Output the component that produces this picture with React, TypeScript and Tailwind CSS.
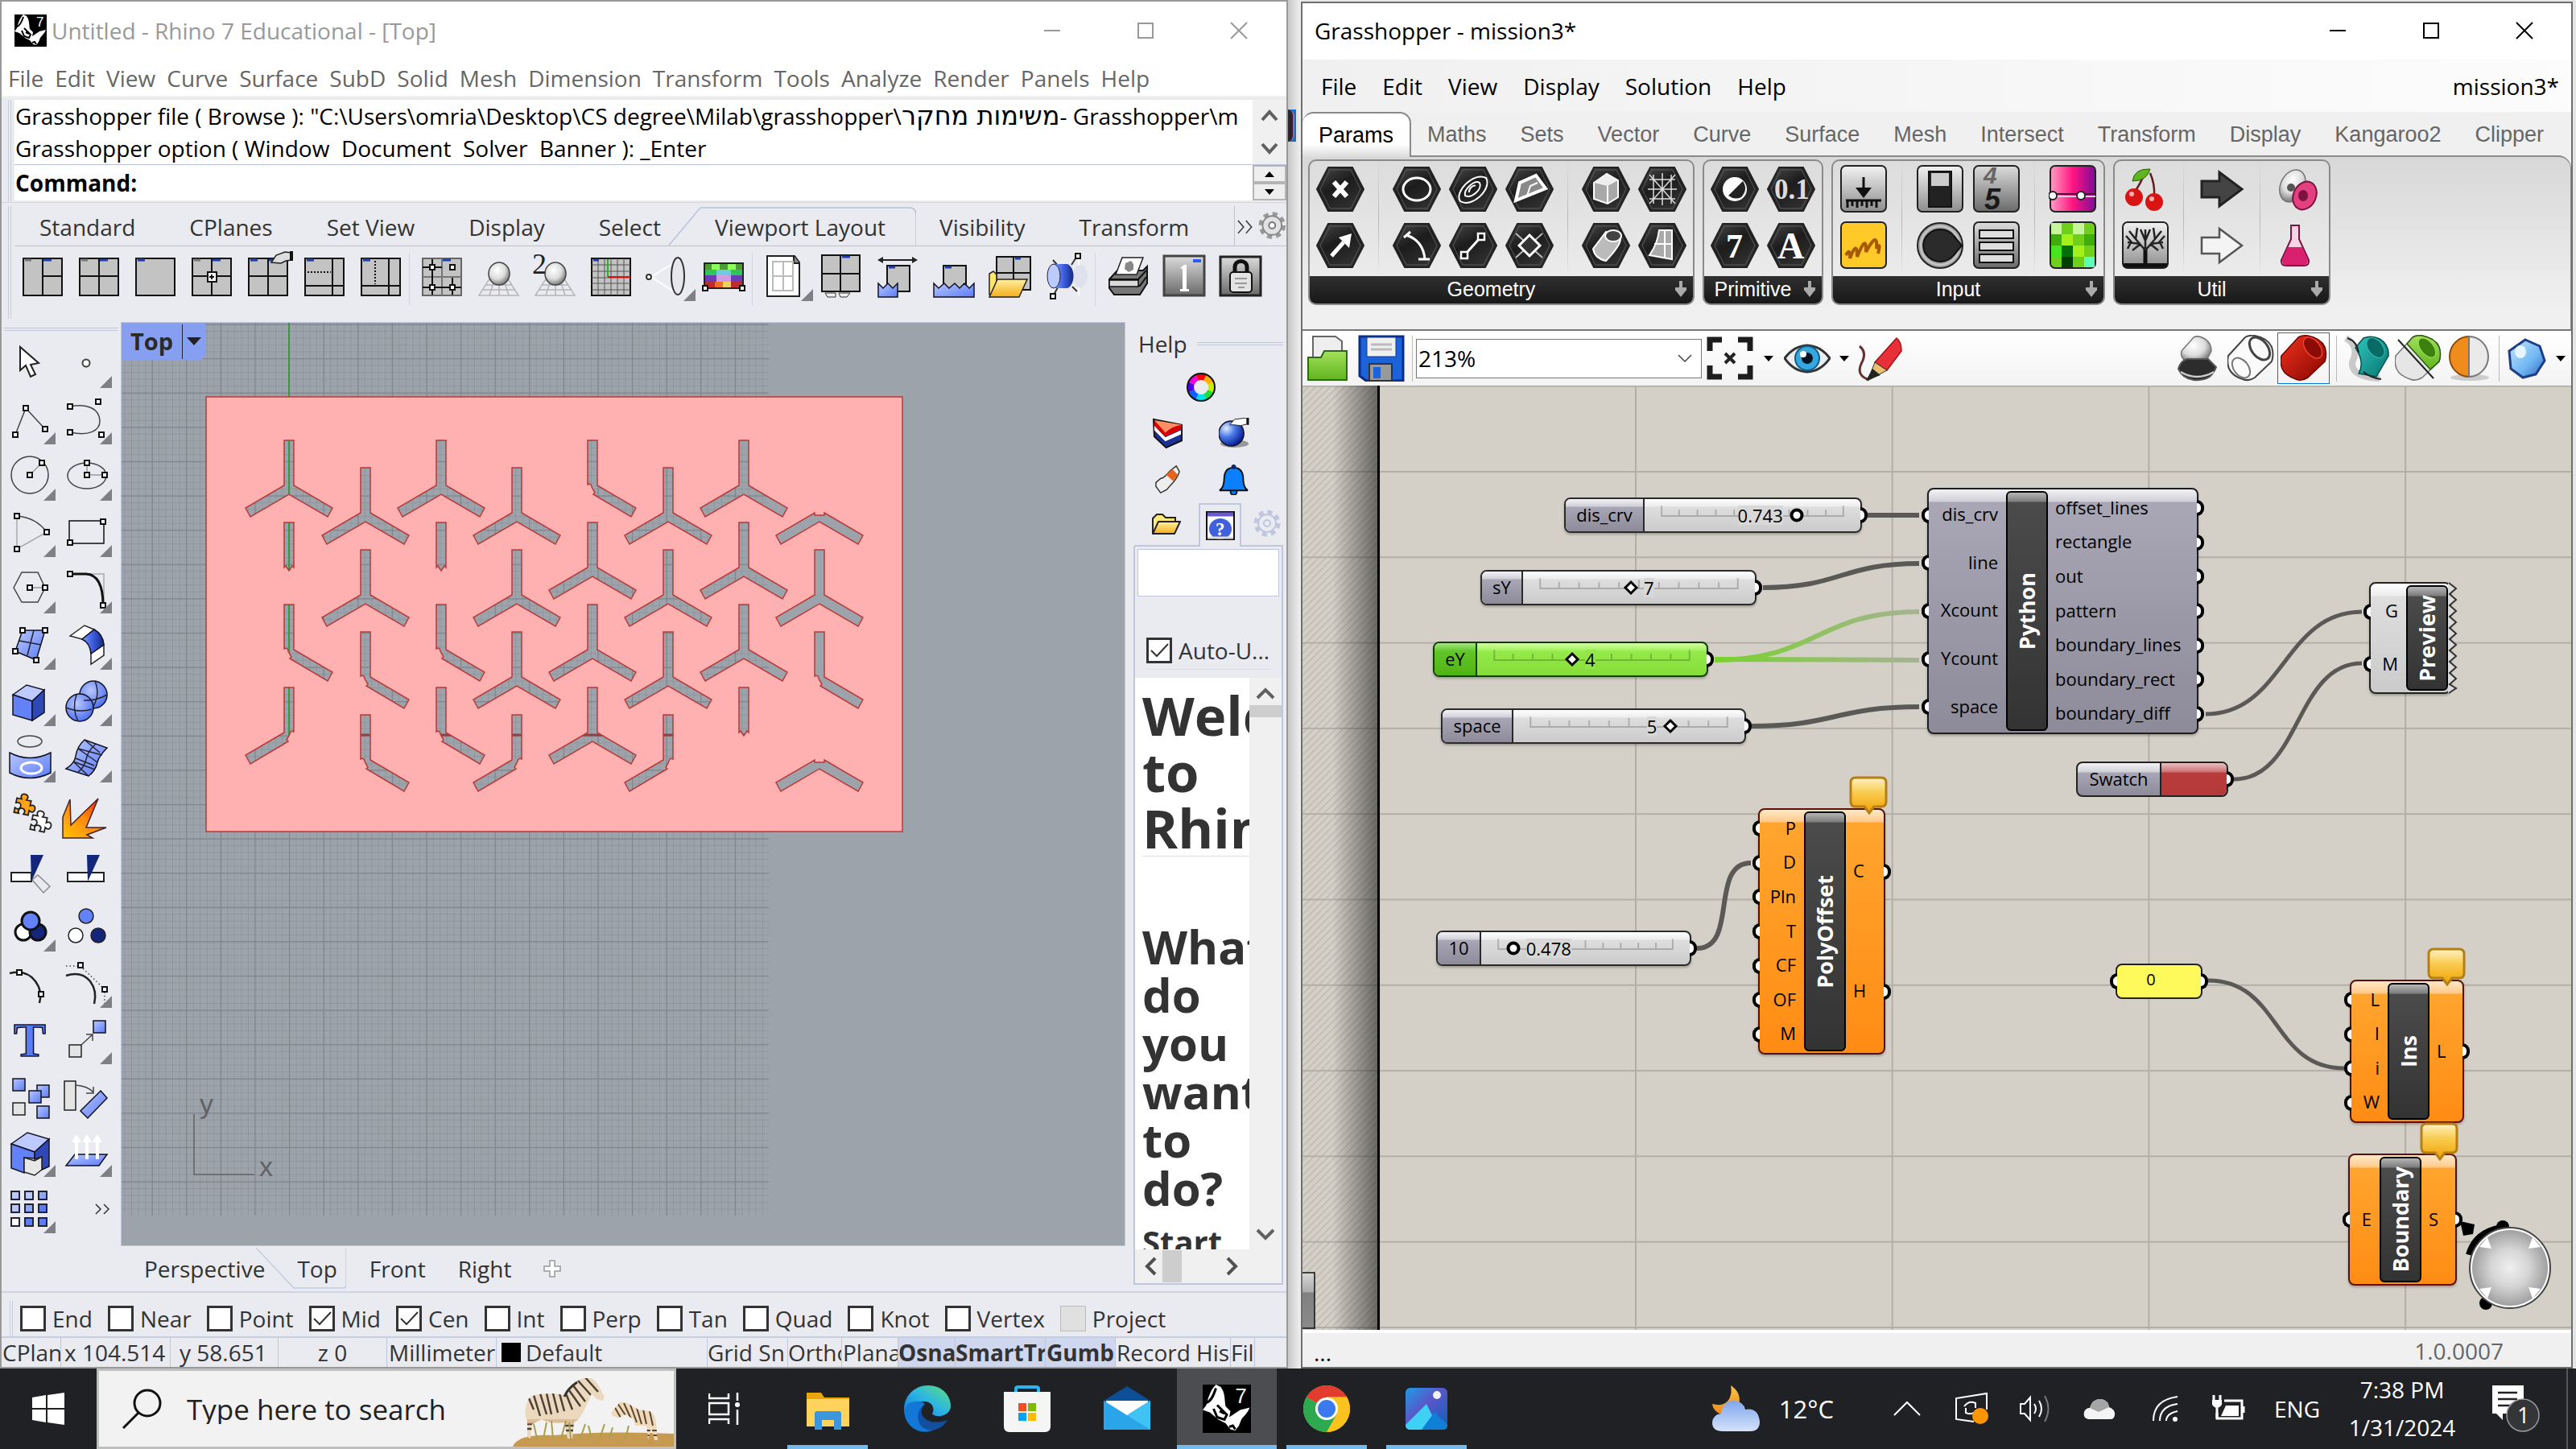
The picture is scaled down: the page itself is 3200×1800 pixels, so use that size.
import type { ReactNode } from "react";

/* ---------- shared paint ---------- */

function Paints() {
  return (
    <svg className="absolute h-0 w-0" aria-hidden="true">
      <defs>
        <linearGradient id="blue" x1="0" y1="0" x2="1" y2="1">
          <stop offset="0" stopColor="#b9c8ff" />
          <stop offset="1" stopColor="#5b7cf7" />
        </linearGradient>
        <linearGradient id="deep" x1="0" y1="0" x2="1" y2="0">
          <stop offset="0" stopColor="#7d9bff" />
          <stop offset="0.5" stopColor="#3c5ce0" />
          <stop offset="1" stopColor="#14297e" />
        </linearGradient>
        <linearGradient id="gray" x1="0" y1="0" x2="0" y2="1">
          <stop offset="0" stopColor="#f2f2f2" />
          <stop offset="1" stopColor="#8d8d8d" />
        </linearGradient>
        <linearGradient id="dark" x1="0" y1="0" x2="0" y2="1">
          <stop offset="0" stopColor="#dcdcdc" />
          <stop offset="1" stopColor="#6a6a6a" />
        </linearGradient>
        <radialGradient id="ball" cx="0.4" cy="0.35" r="0.65">
          <stop offset="0" stopColor="#ffffff" />
          <stop offset="0.6" stopColor="#dcdcdc" />
          <stop offset="1" stopColor="#7c7c7c" />
        </radialGradient>
        <radialGradient id="blueball" cx="0.4" cy="0.35" r="0.65">
          <stop offset="0" stopColor="#b8c9ff" />
          <stop offset="1" stopColor="#5272f0" />
        </radialGradient>
        <radialGradient id="navyball" cx="0.3" cy="0.3" r="0.75">
          <stop offset="0" stopColor="#e4efff" />
          <stop offset="0.45" stopColor="#4a7be8" />
          <stop offset="1" stopColor="#061d94" />
        </radialGradient>
        <linearGradient id="fire" x1="0" y1="1" x2="1" y2="0">
          <stop offset="0" stopColor="#ffc400" />
          <stop offset="0.5" stopColor="#ff8a14" />
          <stop offset="1" stopColor="#e51b00" />
        </linearGradient>
        <linearGradient id="folder" x1="0" y1="0" x2="0" y2="1">
          <stop offset="0" stopColor="#fff0a0" />
          <stop offset="1" stopColor="#f5ae19" />
        </linearGradient>
        <linearGradient id="hex" x1="0" y1="0" x2="0.6" y2="1">
          <stop offset="0" stopColor="#4a4a4a" />
          <stop offset="0.5" stopColor="#1c1c1c" />
          <stop offset="1" stopColor="#303030" />
        </linearGradient>
        <linearGradient id="green" x1="0" y1="0" x2="0" y2="1">
          <stop offset="0" stopColor="#a4e05c" />
          <stop offset="1" stopColor="#5fb51e" />
        </linearGradient>
        <linearGradient id="red" x1="0" y1="0" x2="1" y2="1">
          <stop offset="0" stopColor="#f0321e" />
          <stop offset="1" stopColor="#860500" />
        </linearGradient>
        <linearGradient id="teal" x1="0" y1="0" x2="1" y2="1">
          <stop offset="0" stopColor="#2fc4bd" />
          <stop offset="1" stopColor="#077670" />
        </linearGradient>
        <linearGradient id="pink" x1="0" y1="0" x2="1" y2="0">
          <stop offset="0" stopColor="#ff9fc4" />
          <stop offset="0.5" stopColor="#ff1480" />
          <stop offset="1" stopColor="#7e0a9a" />
        </linearGradient>
        <linearGradient id="sky" x1="0" y1="0" x2="1" y2="1">
          <stop offset="0" stopColor="#c5e8ff" />
          <stop offset="0.6" stopColor="#6fb6f2" />
          <stop offset="1" stopColor="#2c62ba" />
        </linearGradient>
        <linearGradient id="cloud" x1="0" y1="0" x2="0" y2="1">
          <stop offset="0" stopColor="#7fa6ee" />
          <stop offset="1" stopColor="#d5e2fa" />
        </linearGradient>
        <linearGradient id="moon" x1="0" y1="0" x2="0" y2="1">
          <stop offset="0" stopColor="#f6c544" />
          <stop offset="1" stopColor="#ef8b1a" />
        </linearGradient>
        <linearGradient id="edge" x1="0" y1="1" x2="1" y2="0">
          <stop offset="0" stopColor="#1277d6" />
          <stop offset="0.5" stopColor="#2bb5e4" />
          <stop offset="1" stopColor="#5fe07a" />
        </linearGradient>
        <linearGradient id="photo" x1="0" y1="0" x2="1" y2="1">
          <stop offset="0" stopColor="#1e9be6" />
          <stop offset="0.45" stopColor="#5a56c8" />
          <stop offset="1" stopColor="#0a62b8" />
        </linearGradient>
        <radialGradient id="knob">
          <stop offset="0" stopColor="#f0f0f0" />
          <stop offset="0.5" stopColor="#d5d5d5" />
          <stop offset="1" stopColor="#a0a0a0" />
        </radialGradient>
      </defs>
    </svg>
  );
}

type Kids = { children?: ReactNode };

function Dot({ x, y }: { x: number; y: number }) {
  return <rect x={x - 3} y={y - 3} width="6" height="6" fill="#fff" stroke="#111" strokeWidth="2" />;
}

function RhinoLogo({ className }: { className: string }) {
  return (
    <svg viewBox="0 0 40 40" className={className} aria-label="Rhino">
      <rect width="40" height="40" fill="#000" />
      <path d="M3 17C5 9 7 4 11 0L15 2C19 7 18 14 19 18L23 22L22 27L31 21L39 19C37 24 34 26 32 29L30 34L27 38L23 37L19 32L13 29L6 23L0 21Z" fill="#fff" />
      <path d="M3 15C7 14 9 9 11 3M9 20L12 27L18 29L20 25L15 20L12 17M14 22L18 24M22 35L25 34L27 37" fill="none" stroke="#000" strokeWidth="2" />
      <text x="27" y="15" fontSize="17" fill="#fff" fontFamily="Liberation Sans, sans-serif">7</text>
    </svg>
  );
}

/* ---------- Rhino viewport-layout toolbar icons (50 x 48) ---------- */

function Pane({ d, dots, children }: Kids & { d: string; dots?: string }) {
  return (
    <>
      <rect x="1" y="1" width="48" height="46" fill="#c3c3c3" stroke="#111" strokeWidth="2" />
      <path d={d} stroke="#111" strokeWidth="2" fill="none" />
      {dots && <path d={dots} stroke="#111" strokeWidth="2" strokeDasharray="2 2" />}
      <path d="M3 3h8" stroke="#777" strokeWidth="3" />
      {children}
    </>
  );
}

const Blue = ({ d }: { d: string }) => <path d={d} stroke="#1c3fb4" strokeWidth="3" />;

const GroundBall = () => (
  <>
    <path d="M13 28H38L50 47H1ZM9 34H41M5 40H45M20 28L14 47M26 28V47M32 28L38 47" fill="none" stroke="#b5b5b5" strokeWidth="1.5" />
    <ellipse cx="26" cy="20" rx="13" ry="14" fill="url(#ball)" stroke="#444" strokeWidth="1.5" />
  </>
);

const toolbar: { name: string; icon?: ReactNode; tri?: boolean }[] = [
  { name: "Three views", icon: <Pane d="M25 1V47M25 23H49"><Blue d="M26 3H36" /></Pane> },
  { name: "Four views", icon: <Pane d="M25 1V47M1 23H49"><Blue d="M26 3H36" /></Pane> },
  { name: "Maximize", icon: <Pane d=""><Blue d="M3 3H12" /></Pane> },
  { name: "Split center", icon: <Pane d="M25 1V47M1 23H49"><Blue d="M26 3H36" /><rect x="20" y="18" width="11" height="12" fill="#fff" stroke="#111" strokeWidth="2" /><path d="M25 21V27M22 24H28" stroke="#111" strokeWidth="2" /></Pane> },
  { name: "New view", icon: <Pane d="M25 1V47M1 23H49"><Blue d="M3 3H12M26 3H36" /><path d="M29 6L35-3L46-7L54-6V3L47 4L41 7Z" fill="#ddd" stroke="#222" strokeWidth="1.5" /><path d="M54-8V4" stroke="#111" strokeWidth="4" /></Pane> },
  { name: "Split horizontal", icon: <Pane d="M35 1V47M1 35H49" dots="M4 18H33"><Blue d="M3 3H12" /></Pane> },
  { name: "Split vertical", icon: <Pane d="M35 1V47M1 35H49" dots="M18 4V33"><Blue d="M3 3H12" /></Pane> },
  { name: "" },
  { name: "Link views", icon: <><rect x="1" y="1" width="48" height="46" fill="#c3c3c3" stroke="#666" strokeWidth="2" /><path d="M25 1V47M1 24H49" stroke="#777" strokeWidth="2" /><path d="M13 2V46M1 12H25M1 37H49M38 25V46" stroke="#111" strokeWidth="2" /><Blue d="M26 3H36" /><Dot x={13} y={12} /><Dot x={38} y={12} /><Dot x={13} y={37} /><Dot x={38} y={37} /></> },
  { name: "Named view", icon: <GroundBall /> },
  { name: "Two named views", icon: <><GroundBall /><text x="-3" y="20" fontSize="36" fontFamily="Liberation Serif, serif" fill="#222">2</text></> },
  { name: "Grid", icon: <><rect x="1" y="1" width="48" height="46" fill="#c3c3c3" stroke="#111" strokeWidth="2" /><path d="M9 1V47M17 1V47M25 1V47M33 1V47M41 1V47M1 9H49M1 17H49M1 25H49M1 32H49M1 40H49" stroke="#555" /><path d="M21 2V24" stroke="#1cb81c" strokeWidth="2" /><path d="M21 24H49" stroke="#e01010" strokeWidth="2" /><Blue d="M3 3H10" /></> },
  { name: "Lens", tri: true, icon: <><path d="M5 24L37 4M5 24L37 45" stroke="#fff" strokeWidth="2" /><circle cx="2" cy="24" r="3" fill="#fff" stroke="#333" strokeWidth="2" /><ellipse cx="38" cy="23" rx="8" ry="23" fill="#e6e6ec" stroke="#333" strokeWidth="2" /></> },
  { name: "Background bitmap", icon: <><path d="M1 7H49V15H1Z" fill="#4c9a38" /><path d="M10 7H20V15H10ZM30 7H40V15H30Z" fill="#8bff5a" /><path d="M1 15H49V22H1Z" fill="#2fc45b" /><path d="M16 15H34V22H16Z" fill="#6fc9df" /><path d="M1 22H49V30H1Z" fill="#6a3cb8" /><path d="M16 22H34V30H16Z" fill="#d09be3" /><path d="M1 30H49V37H1Z" fill="#bf2a2c" /><path d="M14 30H24V37H14Z" fill="#e8702a" /><path d="M24 30H34V37H24Z" fill="#f0d060" /><rect x="1" y="7" width="48" height="31" fill="none" stroke="#222" strokeWidth="2" /><Dot x={2} y={38} /><Dot x={48} y={38} /></> },
  { name: "" },
  { name: "New layout", tri: true, icon: <><path d="M3-2H37L43 6V48H3Z" fill="#fff" stroke="#222" strokeWidth="2" /><path d="M36-2V7H43" fill="#888" stroke="#222" strokeWidth="2" /><path d="M10 5H35V41H10ZM23 5V41M10 23H35" fill="none" stroke="#bbb" strokeWidth="2" /></> },
  { name: "Viewport properties", icon: <><path d="M5 44H18V49H8ZM22 44H36L32 49H24Z" fill="#eee" stroke="#333" /><path d="M1-3H48V42H1ZM24-3V42M1 20H48" fill="#c3c3c3" stroke="#111" strokeWidth="2" /><Blue d="M26-1H36" /></> },
  { name: "Sync width", icon: <><path d="M12 10H40V42H12Z" fill="#c3c3c3" stroke="#111" strokeWidth="2" /><Blue d="M14 12H22" /><path d="M1 32L7 38L13 32L19 38L25 32V49H1Z" fill="url(#blue)" stroke="#112" strokeWidth="1.5" /><path d="M2 3H48" stroke="#222" strokeWidth="2" /><path d="M0 3L7-1V7ZM50 3L43-1V7Z" fill="#222" /></> },
  { name: "Float viewport", icon: <><path d="M12 10H40V38H12Z" fill="#c3c3c3" stroke="#111" strokeWidth="2" /><Blue d="M14 12H22" /><path d="M0 32L6 38L13 32L19 38L26 32L32 38L38 32L44 38L50 32V49H0Z" fill="url(#blue)" stroke="#112" strokeWidth="1.5" /></> },
  { name: "Open layout", icon: <><path d="M8-1H50V40H8ZM29-1V40M8 19H50" fill="#c3c3c3" stroke="#111" strokeWidth="2" /><Blue d="M31 1H38" /><path d="M-1 46V20L4 17L8 21V46Z" fill="#ffe569" stroke="#222" strokeWidth="1.5" /><path d="M9 27H46L36 49H-1Z" fill="url(#folder)" stroke="#222" strokeWidth="1.5" /></> },
  { name: "Camera", icon: <><path d="M8 3L40 44M8 42L38-2M40 0V47" stroke="#fff" strokeWidth="2" /><path d="M8 3L15 11M38 42L32 36M8 48L14 37M38-2L31 9" stroke="#333" strokeWidth="2" /><ellipse cx="42" cy="23" rx="9" ry="14" fill="#dfe1ef" /><path d="M10 8H26C36 12 36 34 26 38H10Z" fill="url(#deep)" /><ellipse cx="9" cy="23" rx="8" ry="15" fill="#bccbff" stroke="#223" /><Dot x={39} y={-2} /><Dot x={8} y={48} /></> },
  { name: "" },
  { name: "Print", icon: <><path d="M2 27L12 16H44L49 11V32L40 46H8L2 38Z" fill="#777" stroke="#111" strokeWidth="2" /><path d="M2 27H38L48 16M4 35H40L48 24" fill="none" stroke="#111" strokeWidth="2" /><path d="M2 28H38V36H2Z" fill="#d9d9d9" stroke="#111" strokeWidth="1.5" /><path d="M10 21L18 0H44L36 21Z" fill="#fff" stroke="#222" strokeWidth="1.5" /><path d="M22 7L29 4L32 8V15L26 18L21 14Z" fill="#888" /></> },
  { name: "One to one", icon: <><rect x="0" y="-2" width="50" height="49" fill="url(#dark)" stroke="#444" strokeWidth="3" /><path d="M36 4H46" stroke="#2a5bff" strokeWidth="4" /><path d="M20 13L25 9H28V39H31V42H20V39H23V14Z" fill="#fff" /></> },
  { name: "Lock layout", icon: <><rect x="0" y="-1" width="50" height="48" fill="url(#dark)" stroke="#222" strokeWidth="3" /><path d="M18 20V12C18 2 33 2 33 12V20" fill="none" stroke="#111" strokeWidth="5" /><rect x="12" y="18" width="27" height="25" rx="4" fill="#e3e3e3" stroke="#111" strokeWidth="2" /><path d="M18 26H33M18 32H33M22 37H30" stroke="#999" strokeWidth="2" /></> },
];

/* ---------- Rhino side tool icons (70 x 70) ---------- */

const ln = { fill: "none", stroke: "#444", strokeWidth: 1.5 } as const;
const bl = { fill: "url(#blue)", stroke: "#112", strokeWidth: 1.5 } as const;
const wh = { fill: "#fff", stroke: "#222", strokeWidth: 1.5 } as const;

function Puzzle({ fill, at }: { fill: string; at: string }) {
  const d = "M-9-9H-3C-9-18 9-18 3-9H9V-3C18-9 18 9 9 3V9H3C8 0-8 0-3 9H-9V3C0 8 0-8-9-3Z";
  return <path d={d} transform={at} fill={fill} stroke="#222" strokeWidth="1.8" />;
}

const tools: { name: string; tri: boolean; icon: ReactNode }[] = [
  { name: "Select", tri: false, icon: <path d="M24 16V45L31 39L37 53L43 50L37 38L47 36Z" {...wh} strokeWidth="2" /> },
  { name: "Point", tri: true, icon: <circle cx="36" cy="36" r="4.5" fill="#fff" stroke="#444" strokeWidth="2" /> },
  { name: "Polyline", tri: true, icon: <><path d="M18 55L31 22L55 48" {...ln} /><Dot x={18} y={55} /><Dot x={31} y={22} /><Dot x={55} y={48} /></> },
  { name: "Curve", tri: true, icon: <><path d="M16 20C40 15 53 25 53 38C53 50 40 57 16 52" {...ln} /><Dot x={16} y={20} /><Dot x={51} y={14} /><Dot x={16} y={52} /><Dot x={55} y={55} /></> },
  { name: "Circle", tri: true, icon: <><circle cx="36" cy="35" r="23" {...ln} /><path d="M36 35L51 20" {...ln} stroke="#999" /><Dot x={51} y={20} /><Dot x={36} y={35} /></> },
  { name: "Ellipse", tri: true, icon: <><ellipse cx="37" cy="36" rx="24" ry="16" {...ln} /><path d="M37 20V35H59" {...ln} stroke="#999" /><Dot x={37} y={20} /><Dot x={37} y={35} /><Dot x={59} y={35} /></> },
  { name: "Arc", tri: true, icon: <><path d="M20 16V57L57 36" {...ln} stroke="#aaa" /><path d="M20 16Q44 18 57 36" {...ln} /><Dot x={20} y={16} /><Dot x={57} y={36} /><Dot x={20} y={57} /></> },
  { name: "Rectangle", tri: true, icon: <><rect x="15" y="22" width="43" height="28" {...ln} stroke="#111" /><Dot x={57} y={23} /><Dot x={16} y={49} /></> },
  { name: "Polygon", tri: true, icon: <><path d="M16 35L26 16H46L55 35L46 53H26Z" {...ln} /><path d="M36 35H55" {...ln} stroke="#999" /><Dot x={36} y={35} /><Dot x={55} y={35} /></> },
  { name: "Fillet", tri: true, icon: <><path d="M16 18H58V57" {...ln} stroke="#aaa" /><path d="M16 18H36Q57 19 57 57" {...ln} stroke="#111" strokeWidth="3" /><Dot x={16} y={18} /><Dot x={57} y={57} /></> },
  { name: "Surface", tri: true, icon: <><path d="M27 18H55L44 55L18 44Z" {...bl} /><path d="M41 18L33 49M23 31L50 36" {...ln} stroke="#223" /><Dot x={27} y={18} /><Dot x={55} y={18} /><Dot x={44} y={55} /><Dot x={18} y={44} /></> },
  { name: "Fillet surface", tri: true, icon: <><path d="M16 25L34 12L46 17L31 29Z" {...wh} /><path d="M58 36V49L42 60V47Z" {...wh} /><path d="M46 17Q57 23 58 36L42 47Q41 34 31 29Z" fill="url(#deep)" stroke="#112" strokeWidth="1.5" /></> },
  { name: "Box", tri: true, icon: <><path d="M15 28L32 16L54 22L39 36Z" fill="#bccaff" stroke="#112" strokeWidth="1.5" /><path d="M15 28L39 36V60L15 53Z" fill="#6381f8" stroke="#112" strokeWidth="1.5" /><path d="M39 36L54 22V50L39 60Z" fill="#2e48b8" stroke="#112" strokeWidth="1.5" /></> },
  { name: "Boolean union", tri: true, icon: <><circle cx="45" cy="28" r="17" fill="url(#blueball)" stroke="#112" strokeWidth="1.5" /><circle cx="28" cy="44" r="17" fill="url(#blueball)" stroke="#112" strokeWidth="1.5" /><path d="M33 35Q48 36 62 28M47 11Q54 28 44 44M11 44Q28 51 43 46M24 28Q18 45 26 61" {...ln} stroke="#223" /></> },
  { name: "Project", tri: true, icon: <><ellipse cx="36" cy="16" rx="15" ry="7" {...ln} /><path d="M11 30Q36 43 62 30V55Q36 68 11 55Z" {...bl} /><ellipse cx="38" cy="49" rx="13" ry="7" fill="none" stroke="#fff" strokeWidth="3" /></> },
  { name: "Mesh", tri: true, icon: <><path d="M34 14L62 24Q52 34 50 42Q48 52 39 59L11 50Q22 43 23 34Q25 22 34 14Z" {...bl} /><path d="M48 19Q38 28 36 38Q34 48 25 55M26 25L56 33M20 41L47 51M34 14L53 30M26 25L50 42M23 37L46 46M20 41L39 59" {...ln} stroke="#223" /></> },
  { name: "Join", tri: false, icon: <><Puzzle fill="#ffa318" at="translate(27 27) rotate(12)" /><Puzzle fill="#fff" at="translate(47 48) rotate(12)" /></> },
  { name: "Explode", tri: false, icon: <path d="M7 40L16 18L17 50L51 17L36 53L61 53L37 62L44 66H7Z" fill="url(#fire)" stroke="#422" strokeWidth="1.5" /> },
  { name: "Trim", tri: false, icon: <><rect x="13" y="39" width="25" height="11" {...wh} strokeWidth="2" /><path d="M39 48L46 42L61 56L53 64Z" {...ln} stroke="#888" /><path d="M37 17H53L38 50Z" fill="#14267a" /></> },
  { name: "Split", tri: false, icon: <><rect x="13" y="39" width="45" height="11" {...wh} strokeWidth="2" /><path d="M37 17H53L38 50Z" fill="#14267a" /></> },
  { name: "Group", tri: true, icon: <g stroke="#111" strokeWidth="3"><circle cx="28" cy="43" r="10" fill="#fff" /><circle cx="46" cy="43" r="10" fill="#14267a" /><circle cx="37" cy="29" r="11" fill="#6381f8" /></g> },
  { name: "Ungroup", tri: false, icon: <g stroke="#222" strokeWidth="1.5"><circle cx="36" cy="23" r="9" fill="#6381f8" /><circle cx="23" cy="47" r="9" fill="#fff" /><circle cx="51" cy="47" r="9" fill="#14267a" /></g> },
  { name: "Edit points", tri: false, icon: <><path d="M11 24Q32 19 43 34Q52 46 48 61" {...ln} stroke="#222" strokeWidth="2.5" /><Dot x={23} y={23} /><Dot x={50} y={50} /></> },
  { name: "Control points", tri: true, icon: <><path d="M11 27Q30 21 41 34Q50 46 46 62" {...ln} stroke="#222" strokeWidth="2.5" /><path d="M11 15H29L59 44V62" {...ln} strokeDasharray="1.5 3" /><Dot x={29} y={14} /><Dot x={59} y={44} /></> },
  { name: "Text", tri: false, icon: <text x="16" y="57" fontSize="60" fontWeight="700" fontFamily="Liberation Serif, serif" fill="#5b7cf7" stroke="#112" strokeWidth="1.5">T</text> },
  { name: "Move", tri: true, icon: <><rect x="45" y="13" width="15" height="15" {...bl} /><rect x="15" y="43" width="15" height="15" {...wh} fill="#e4e4e4" /><path d="M30 43L44 30M36 30H44V38" {...ln} /></> },
  { name: "Copy", tri: false, icon: <><rect x="15" y="15" width="15" height="15" {...bl} /><rect x="15" y="45" width="15" height="15" {...wh} fill="#e4e4e4" /><rect x="45" y="23" width="15" height="15" {...bl} /><rect x="35" y="30" width="15" height="15" {...bl} /><rect x="45" y="49" width="15" height="15" {...bl} /></> },
  { name: "Rotate", tri: false, icon: <><rect x="9" y="18" width="14" height="36" {...wh} fill="#e4e4e4" /><path d="M54 30L62 39L38 64L29 55Z" {...bl} /><path d="M23 23Q38 24 45 32M36 33H45V25" {...ln} /></> },
  { name: "Solid edit", tri: true, icon: <><path d="M13 26L33 12L60 20L42 36Z" fill="#bccaff" stroke="#112" strokeWidth="1.5" /><path d="M13 26L42 36V44L29 43V62L13 56Z" fill="#6381f8" stroke="#112" strokeWidth="1.5" /><path d="M42 36L60 20V54L51 58V42L42 45Z" fill="#2e48b8" stroke="#112" strokeWidth="1.5" /><path d="M29 43L42 47L51 42V58L42 65L29 61Z" {...wh} fill="#e8e8e8" /></> },
  { name: "Extrude", tri: true, icon: <><path d="M22 39H62L52 53H11Z" {...bl} /><path d="M24 45V22M37 45V22M50 45V22" stroke="#fff" strokeWidth="4" /><path d="M18 24L24 14L30 24ZM31 24L37 14L43 24ZM44 24L50 14L56 24Z" fill="#fff" /></> },
  { name: "Array", tri: true, icon: <g stroke="#223" strokeWidth="2">{[15, 31, 48].map((y, r) => [13, 30, 47].map((x, c) => <rect key={`${x}-${y}`} x={x} y={y} width="10" height="10" fill={r === 2 && c === 0 ? "#fff" : r + c > 2 ? "#5b7cf7" : r + c > 1 ? "#8ea6fb" : "#b9c8ff"} />))}</g> },
];

/* ---------- Rhino model ---------- */

const SHAPES: Record<string, string> = {
  Y: "M{x} {y}m-6 0h12v56l48 28l-6 11l-48-28l-48 28l-6-11l48-28z",
  R: "M{x} {y}m-6 0h12v56l48 28l-6 11l-47-28l2-2l-3-5l-2-5l-2-1l-2 1z",
  L: "M{x} {y}m6 0h-12v56l-48 28l6 11l47-28l-2-2l3-5l2-5l2-1l2 1z",
  I: "M{x} {y}m-6 0h12v56l-2-2l-2 3l-2 3l-2-3l-2-3l-2 2z",
  C: "M{x} {y}m6 56l48 28l-6 11l-48-28l-48 28l-6-11l48-28v3h12z",
};
const COLUMNS = ["YIRL", "YYRR", "YIRR", "YYYL", "RYYY", "YYYL", "YYYI", "CYRC"];

const pattern = COLUMNS.flatMap((col, i) =>
  col.split("").map((k, j) =>
    SHAPES[k].replace("{x}", String(Math.round(208.4 + i * 94.15))).replace("{y}", String(146 + (i % 2) * 34 + Math.round(j * 102.2))),
  ),
).join("");

function Viewport() {
  return (
    <div className="relative min-h-0 flex-1 overflow-hidden border border-[#bfc6de] bg-[#9da3aa]">
      <svg className="absolute inset-0 h-full w-full" aria-label="Top viewport">
        <defs>
          <pattern id="minor" x="208" y="1.5" width="8.52" height="8.52" patternUnits="userSpaceOnUse">
            <path d="M0 0H9M0 0V9" stroke="#8b9299" strokeWidth="1.4" />
          </pattern>
          <pattern id="major" x="208" y="1.5" width="42.6" height="42.6" patternUnits="userSpaceOnUse">
            <path d="M0 0H43M0 0V43" stroke="#7f858d" strokeWidth="2.4" />
          </pattern>
        </defs>
        <rect width="804" height="1109" fill="url(#minor)" />
        <rect width="804" height="1109" fill="url(#major)" />
        <path d="M208 0V512" stroke="#3f9447" strokeWidth="2" />
        <path d="M208 512H804" stroke="#8f4245" strokeWidth="3" />
        <path d={`M105 92H970V632H105Z${pattern}`} fill="#ffb0b0" stroke="#b83a3a" strokeWidth="1.5" fillRule="evenodd" />
        <path d="M90 983V1058H165" fill="none" stroke="#606468" strokeWidth="1.5" />
        <g fontSize="34" fill="#5f6367" fontFamily="Liberation Sans, sans-serif">
          <text x="97" y="982">y</text>
          <text x="171" y="1060">x</text>
        </g>
      </svg>
      <div className="absolute left-0 top-0 flex h-[46px] items-center rounded-br-lg bg-[#879ff0] font-bold text-[#2a2a2a]">
        <button className="px-[11px] text-[29px] leading-[44px]">Top</button>
        <button aria-label="Viewport menu" className="flex h-[43px] w-[29px] items-center justify-center border-l border-[#222]">
          <svg viewBox="0 0 18 10" className="h-[10px] w-[18px]"><path d="M0 0H18L9 10Z" fill="#222" /></svg>
        </button>
      </div>
    </div>
  );
}

/* ---------- small controls ---------- */

function WindowButtons({ className }: { className: string }) {
  return (
    <div className={`flex items-center ${className}`}>
      <button aria-label="Minimize"><svg viewBox="0 0 22 22" className="h-[22px] w-[22px]"><path d="M1 11H21" stroke="currentColor" strokeWidth="2" /></svg></button>
      <button aria-label="Maximize"><svg viewBox="0 0 22 22" className="h-[22px] w-[22px]"><rect x="2" y="2" width="18" height="18" fill="none" stroke="currentColor" strokeWidth="2" /></svg></button>
      <button aria-label="Close"><svg viewBox="0 0 22 22" className="h-[22px] w-[22px]"><path d="M1 1L21 21M21 1L1 21" stroke="currentColor" strokeWidth="2" /></svg></button>
    </div>
  );
}

function Tick({ label, checked, disabled }: { label: string; checked?: boolean; disabled?: boolean }) {
  return (
    <label className="flex items-center gap-2 whitespace-nowrap">
      <span className="relative h-8 w-8">
        <input type="checkbox" defaultChecked={checked} disabled={disabled} className="peer h-8 w-8 appearance-none border-[3px] border-[#333] bg-white disabled:border disabled:border-[#bbb] disabled:bg-[#e0e0e0]" />
        <svg viewBox="0 0 32 32" className="pointer-events-none absolute inset-0 hidden h-8 w-8 peer-checked:block"><path d="M6 16L13 23L27 8" fill="none" stroke="#333" strokeWidth="2" /></svg>
      </span>
      {label}
    </label>
  );
}

function Chevron({ d, className }: { d: string; className: string }) {
  return <svg viewBox="0 0 24 24" className={className}><path d={d} fill="none" stroke="currentColor" strokeWidth="4" /></svg>;
}

const Corner = () => (
  <svg viewBox="0 0 15 15" className="absolute bottom-[3px] right-[2px] h-[15px] w-[15px]"><path d="M15 0V15H0Z" fill="#808084" /></svg>
);

/* ---------- Rhino window ---------- */

const rhinoMenu = ["File", "Edit", "View", "Curve", "Surface", "SubD", "Solid", "Mesh", "Dimension", "Transform", "Tools", "Analyze", "Render", "Panels", "Help"];

const panelTabs: { name: string; icon: ReactNode }[] = [
  { name: "Layers", icon: <><path d="M1 2L37 9V29L17 38L2 24Z" fill="#1c3192" stroke="#111" strokeWidth="2" /><path d="M2 16L16 30L36 21V16L16 25L2 10Z" fill="#fff" /><path d="M2 4L37 9V14L16 24L2 10Z" fill="#d80000" /><path d="M2 3L37 9Q24 11 16 19Z" fill="#ff9064" /></> },
  { name: "Rendering", icon: <><ellipse cx="20" cy="33" rx="18" ry="5" fill="#999" /><circle cx="16" cy="20" r="16" fill="url(#navyball)" stroke="#112" strokeWidth="1.5" /><path d="M14 9L20 2L36 0V8L28 10L20 9Z" fill="#fff" stroke="#222" /><path d="M37 0V9" stroke="#111" strokeWidth="3" /></> },
  { name: "Materials", icon: <><path d="M4 23L10 18C18 16 18 10 26 5L30 2L34 9C30 22 22 26 18 32L10 36L4 28Z" fill="#eee" stroke="#333" strokeWidth="1.5" /><path d="M17 13L25 6L32 13Q29 18 26 21Z" fill="#e8641c" /></> },
  { name: "Notifications", icon: <><circle cx="19" cy="35" r="4" fill="#0a7aff" stroke="#111" strokeWidth="2" /><path d="M1 33Q7 30 7 16Q8 4 19 4Q30 4 31 16Q31 30 37 33Z" fill="#0a80ff" stroke="#111" strokeWidth="2" /><circle cx="19" cy="3" r="3" fill="#112a66" /></> },
];

function HelpPanel() {
  return (
    <aside className="flex w-[200px] shrink-0 flex-col pb-2 pr-1 text-[#333]">
      <div className="flex h-[54px] items-center gap-3 pl-4">
        <span>Help</span>
        <span className="h-1 flex-1 border-y border-[#bfc6de]" />
      </div>
      <div className="flex h-[55px] items-center justify-center pb-[2px] pr-2">
        <svg viewBox="0 0 36 36" className="h-9 w-9" aria-label="Display">
          {[["#ff0000", 0], ["#ffb000", 45], ["#c8f000", 90], ["#18e038", 135], ["#00e0e8", 180], ["#1060ff", 225], ["#5000f0", 270], ["#f000e0", 315]].map(([c, a]) => (
            <path key={a} d="M18 18L11.5 2.3A17 17 0 0 1 24.5 2.3Z" fill={c as string} transform={`rotate(${a} 18 18)`} />
          ))}
          <circle cx="18" cy="18" r="9" fill="#eaebf0" />
          <circle cx="18" cy="18" r="17" fill="none" stroke="#111" strokeWidth="2" />
        </svg>
      </div>
      <div className="grid h-[116px] grid-cols-2 place-items-center pl-[12px] pr-5">
        {panelTabs.map((t) => (
          <button key={t.name} aria-label={t.name}><svg viewBox="0 0 39 39" className="h-[38px] w-[38px]">{t.icon}</svg></button>
        ))}
      </div>
      <div className="flex h-[54px] items-stretch pl-[11px]">
        <button aria-label="Files" className="flex w-[80px] items-center justify-center border-b-2 border-[#bfc6de]">
          <svg viewBox="0 0 36 26" className="h-[26px] w-9"><path d="M1 24V6L6 1H13L17 5H29V11" fill="#ffe97a" stroke="#222" strokeWidth="2" /><path d="M8 10H35L28 25H1Z" fill="url(#folder)" stroke="#222" strokeWidth="2" /></svg>
        </button>
        <button aria-label="Help" className="flex w-[53px] items-center justify-center border-2 border-b-0 border-[#bfc6de]">
          <svg viewBox="0 0 36 36" className="h-9 w-9"><rect x="1" y="1" width="34" height="34" fill="#fff" stroke="#111" strokeWidth="2" /><path d="M2 4H34" stroke="#6a5ad0" strokeWidth="5" /><ellipse cx="18" cy="22" rx="14" ry="13" fill="#3f62dc" /><path d="M2 33H34" stroke="#ddd" strokeWidth="3" /><text x="12" y="30" fontSize="23" fontWeight="700" fill="#fff" fontFamily="Liberation Serif, serif">?</text></svg>
        </button>
        <button aria-label="Panel options" className="flex flex-1 items-center justify-center border-b-2 border-[#bfc6de] pb-[2px] pl-3">
          <svg viewBox="0 0 36 36" className="h-9 w-9"><circle cx="18" cy="18" r="14" fill="none" stroke="#bfc6de" strokeWidth="5" strokeDasharray="6 5" /><circle cx="18" cy="18" r="11" fill="#eaebf0" stroke="#bfc6de" strokeWidth="2" /><circle cx="18" cy="18" r="4" fill="none" stroke="#bfc6de" strokeWidth="2" /></svg>
        </button>
      </div>
      <div className="ml-[10px] flex min-h-0 flex-1 flex-col border-2 border-t-0 border-[#bfc6de]">
        <div className="px-[3px] pt-[3px]">
          <input aria-label="Help topic" className="h-[59px] w-full border border-[#bfc6de] bg-white" />
        </div>
        <div className="mt-[51px] flex h-8 items-center pl-[14px]"><Tick label="Auto-U..." checked /></div>
        <div className="mx-[14px] mt-[7px] h-px bg-[#dcdde4]" />
        <div className="mt-[10px] flex min-h-0 flex-1 bg-white">
          <div className="w-[143px] overflow-hidden pl-[9px]">
            <h1 className="w-[180px] border-b border-[#ddd] pt-[11px] text-[67px] font-bold leading-[70px]">Welcome<br />to<br />Rhino</h1>
            <h2 className="mt-[82px] w-[180px] text-[58px] font-bold leading-[60px]">What<br />do<br />you<br />want<br />to<br />do?</h2>
            <h3 className="mt-[12px] text-[40px] font-bold leading-[50px]">Start</h3>
          </div>
          <div className="flex flex-1 flex-col items-center bg-[#f0f0f0] text-[#606060]">
            <button aria-label="Scroll up" className="h-[34px]"><Chevron d="M2 20L12 10L22 20" className="h-6 w-6" /></button>
            <div className="h-[15px] w-[40px] bg-[#cdcdcd]" />
            <button aria-label="Scroll down" className="mt-auto h-[38px]"><Chevron d="M2 7L12 17L22 7" className="h-6 w-6" /></button>
          </div>
        </div>
        <div className="flex h-[42px] items-center bg-[#f0f0f0] text-[#505050]">
          <button aria-label="Scroll left" className="w-[34px] pl-[8px]"><Chevron d="M17 2L7 12L17 22" className="h-6 w-6" /></button>
          <div className="h-10 w-6 bg-[#cdcdcd]" />
          <button aria-label="Scroll right" className="ml-[50px]"><Chevron d="M7 2L17 12L7 22" className="h-6 w-6" /></button>
        </div>
      </div>
    </aside>
  );
}

const statusCells: [string, string][] = [
  ["CPlan", "w-[74px] pl-[1px]"], ["x 104.514", "w-[136px] pl-[4px]"], ["y 58.651", "w-[134px] pl-[11px]"], ["z 0", "w-[135px] text-center"], ["Millimeter", "w-[136px] pl-[2px]"],
  ["Default", "w-[262px]"], ["Grid Sn", "w-[100px]"], ["Ortho", "w-[67px]"], ["Plana", "w-[70px] pl-[1px]"], ["Osna", "w-[71px] bg-[#cfd7ee] font-bold"],
  ["SmartTr", "w-[112px] bg-[#cfd7ee] font-bold"], ["Gumb", "w-[87px] pl-[1px] bg-[#cfd7ee] font-bold"], ["Record His", "w-[143px] pl-[1px]"], ["Fil", "w-[30px]"],
];

function RhinoWindow() {
  return (
    <section className="flex min-w-0 flex-1 flex-col overflow-hidden border-2 border-[#999] bg-[#eaebf0] text-[#333]">
      <div className="flex h-[71px] shrink-0 items-center bg-white pl-4 text-[#999]">
        <RhinoLogo className="h-10 w-10" />
        <h1 className="ml-[6px] flex-1">Untitled - Rhino 7 Educational - [Top]</h1>
        <WindowButtons className="gap-[94px] pr-12" />
      </div>
      <nav className="flex h-12 shrink-0 items-center gap-[14px] border-b-2 border-[#f0f0f0] bg-white pl-2 pt-[2px] text-[#666]">
        {rhinoMenu.map((m) => <button key={m}>{m}</button>)}
      </nav>
      <div className="ml-2 mt-[3px] h-[127px] shrink-0 border-l-4 border-double border-[#c8cee2] pl-1">
        <div className="flex h-[81px] border-b border-[#b9c2dc] bg-white text-black">
          <div className="min-w-0 flex-1 overflow-hidden whitespace-pre pl-px leading-10">
            <p className="h-10">{'Grasshopper file ( Browse ): "C:\\Users\\omria\\Desktop\\CS degree\\Milab\\grasshopper\\'}<bdo dir="rtl" className="font-['DejaVu_Sans',sans-serif] text-[32px] leading-none">משימות מחקר</bdo>{"- Grasshopper\\m"}</p>
            <p>{"Grasshopper option ( Window  Document  Solver  Banner ): _Enter"}</p>
          </div>
          <div className="flex w-[42px] flex-col items-center justify-between bg-[#f0f0f0] py-2 text-[#606060]">
            <button aria-label="Scroll up" className="leading-none"><Chevron d="M3 17L12 7L21 17" className="h-6 w-6" /></button>
            <button aria-label="Scroll down" className="leading-none"><Chevron d="M3 7L12 17L21 7" className="h-6 w-6" /></button>
          </div>
        </div>
        <div className="flex h-[44px] bg-white text-black">
          <label htmlFor="command" className="pl-px font-bold leading-[44px]">Command:</label>
          <input id="command" className="min-w-0 flex-1 px-2 outline-none" />
          <div className="flex w-[42px] flex-col">
            <button aria-label="Previous" className="flex flex-1 items-center justify-center border-2 border-[#b5b5b5] bg-[#eee]"><svg viewBox="0 0 12 7" className="h-[7px] w-3"><path d="M6 0L12 7H0Z" /></svg></button>
            <button aria-label="Next" className="flex flex-1 items-center justify-center border-2 border-[#b5b5b5] bg-[#eee]"><svg viewBox="0 0 12 7" className="h-[7px] w-3"><path d="M6 7L12 0H0Z" /></svg></button>
          </div>
        </div>
      </div>
      <div className="flex h-[149px] shrink-0 flex-col border-t border-[#cfd4e6] pl-2 pt-[4px]">
        <div className="flex h-[140px] flex-col border-l-4 border-double border-[#c8cee2] pl-1">
          <div className="relative flex h-[50px] shrink-0 items-center gap-[67px] overflow-hidden whitespace-nowrap border-b border-[#b9c2dc] pl-[31px] pt-[2px]">
            {["Standard", "CPlanes", "Set View", "Display", "Select"].map((t) => <button key={t}>{t}</button>)}
            <button className="relative h-[50px]">
              <svg viewBox="0 0 309 50" className="absolute -left-[59px] top-0 h-[50px] w-[309px]"><path d="M0 50L41 1H300Q309 1 309 10V50" fill="#eaebf0" stroke="#b9c2dc" strokeWidth="1.5" /></svg>
              <span className="relative">Viewport Layout</span>
            </button>
            {["Visibility", "Transform"].map((t) => <button key={t}>{t}</button>)}
            <button aria-label="More tabs" className="absolute bottom-0 right-0 top-0 flex w-[65px] items-center border-l border-[#b9c2dc]">
              <svg viewBox="0 0 65 50" className="h-[50px] w-[65px]"><path d="M4 18L11 26L4 34M14 18L21 26L14 34" fill="none" stroke="#333" strokeWidth="1.5" /><circle cx="47" cy="24" r="14" fill="none" stroke="#999" strokeWidth="6" strokeDasharray="6 5" /><circle cx="47" cy="24" r="12" fill="#e2e2e4" stroke="#888" strokeWidth="2" /><circle cx="47" cy="24" r="4" fill="#fff" stroke="#777" strokeWidth="2" /></svg>
            </button>
          </div>
          <div className="flex h-[62px] items-end">
            {toolbar.map((t, i) =>
              t.icon ? (
                <button key={i} aria-label={t.name} className="relative flex h-[60px] w-[70px] shrink-0 items-end justify-center">
                  <svg viewBox="0 0 50 48" className="h-12 w-[50px] overflow-visible">{t.icon}</svg>
                  {t.tri && <svg viewBox="0 0 15 15" className="absolute -bottom-[6px] right-0 h-[15px] w-[15px]"><path d="M15 0V15H0Z" fill="#808084" /></svg>}
                </button>
              ) : (
                <span key={i} className="-mb-[12px] h-[66px] w-[6px] shrink-0 border-l border-[#d4d6de]" />
              ),
            )}
          </div>
        </div>
      </div>
      <div className="flex min-h-0 flex-1 border-b-2 border-[#d0d4e4]">
        <div className="w-[148px] shrink-0">
          <div className="mx-[3px] mt-[7px] h-1 border-y border-[#bfc6de]" />
          <div className="-ml-px mt-[4px] grid w-[140px] grid-cols-[70px_70px]">
            {tools.map((t) => (
              <button key={t.name} aria-label={t.name} className="relative h-[70px] w-[70px]">
                <svg viewBox="0 0 70 70" className="h-[70px] w-[70px]">{t.icon}</svg>
                {t.tri && <Corner />}
              </button>
            ))}
            <button aria-label="More tools" className="relative h-[70px] w-[70px]">
              <svg viewBox="0 0 70 70" className="h-[70px] w-[70px]"><path d="M48 31L54 37L48 43M58 31L64 37L58 43" fill="none" stroke="#333" strokeWidth="1.5" /></svg>
            </button>
          </div>
        </div>
        <div className="flex min-w-0 flex-1 flex-col">
          <Viewport />
          <nav className="flex h-[56px] shrink-0 items-center gap-10 pl-[29px]">
            <button>Perspective</button>
            <button className="relative h-[56px]">
              <svg viewBox="0 0 112 52" className="absolute -left-[51px] top-[2px] h-[52px] w-[112px]"><path d="M0 0L47 50H108Q112 50 112 46V0" fill="none" stroke="#c5cae0" strokeWidth="1.5" /></svg>
              <span className="relative">Top</span>
            </button>
            <button>Front</button>
            <button>Right</button>
            <button aria-label="Add viewport"><svg viewBox="0 0 22 22" className="h-[22px] w-[22px]"><path d="M8 1H14V8H21V14H14V21H8V14H1V8H8Z" fill="#fff" stroke="#999" strokeWidth="1.5" /></svg></button>
          </nav>
        </div>
        <HelpPanel />
      </div>
      <div className="flex h-[54px] shrink-0 items-center pl-[10px] pt-[10px]">
        <div className="flex h-[44px] items-center gap-[19px] border-l-4 border-double border-[#c8cee2] pl-[9px]">
          {["End", "Near", "Point", "Mid", "Cen", "Int", "Perp", "Tan", "Quad", "Knot", "Vertex"].map((n) => <Tick key={n} label={n} checked={n === "Mid" || n === "Cen"} />)}
          <Tick label="Project" disabled />
        </div>
      </div>
      <div className="flex h-[38px] shrink-0 border-t-2 border-[#c8cee2]">
        {statusCells.map(([t, c]) => (
          <div key={t} className={`h-full shrink-0 overflow-hidden whitespace-nowrap border-r border-[#bfc6de] leading-9 ${c}`}>
            {t === "Default" ? <span className="flex h-full items-center gap-[6px] pl-[6px]"><i className="h-6 w-6 bg-black" />Default</span> : t}
          </div>
        ))}
      </div>
    </section>
  );
}

/* ---------- Grasshopper ribbon ---------- */

function Hex({ children }: Kids) {
  return (
    <>
      <path d="M15 3H45L59 30L45 57H15L1 30Z" fill="url(#hex)" stroke="#222" strokeWidth="2" />
      <path d="M17 6H43L55 30L43 54H17L5 30Z" fill="none" stroke="#5a5a5a" />
      {children}
    </>
  );
}

function Key({ fill = "url(#gray)", children }: Kids & { fill?: string }) {
  return (
    <>
      <rect x="2" y="1" width="56" height="57" rx="6" fill={fill} stroke="#222" strokeWidth="2" />
      {children}
    </>
  );
}

const w = { fill: "none", stroke: "#fff", strokeWidth: 3 } as const;

const groups: { title: string; cols: ([ReactNode, ReactNode] | null)[] }[] = [
  {
    title: "Geometry",
    cols: [
      [<Hex><path d="M22 21L38 39M38 21L22 39" {...w} strokeWidth="6" /></Hex>, <Hex><path d="M19 43L34 26" {...w} strokeWidth="5" /><path d="M28 20L44 15L41 33Z" fill="#fff" /></Hex>],
      null,
      [<Hex><ellipse cx="30" cy="30" rx="17" ry="14" {...w} /></Hex>, <Hex><path d="M17 17Q38 24 40 47M14 20L22 13M32 47H46" {...w} /></Hex>],
      [<Hex><path d="M14 45C6 34 30 8 46 16C54 30 28 54 14 45ZM20 38C18 30 32 18 38 22C42 30 28 42 20 38ZM25 34C24 30 30 24 33 26" {...w} strokeWidth="2" /></Hex>, <Hex><path d="M21 40L39 20" {...w} /><rect x="15" y="38" width="8" height="8" fill="#111" stroke="#fff" strokeWidth="2.5" /><rect x="36" y="15" width="8" height="8" fill="#111" stroke="#fff" strokeWidth="2.5" /></Hex>],
      [<Hex><path d="M13 44L18 22L38 13L50 29Z" fill="#8a8a8a" stroke="#fff" strokeWidth="4" /><path d="M27 38L31 26L40 22" {...w} strokeWidth="2" /></Hex>, <Hex><path d="M13 15L46 45M46 15L13 45" stroke="#bbb" strokeWidth="2" /><path d="M30 17L43 30L30 43L17 30Z" fill="#333" stroke="#fff" strokeWidth="3" /></Hex>],
      null,
      [<Hex><path d="M15 22L31 11L45 19V40L32 48L15 42Z" fill="#a8a8a8" stroke="#fff" strokeWidth="2" /><path d="M15 22L31 11L45 19L32 26Z" fill="#eee" /><path d="M32 26V48" {...w} strokeWidth="2" /></Hex>, <Hex><path d="M14 34L30 13L48 22Q48 30 30 49Q16 46 14 34Z" fill="#bbb" stroke="#fff" strokeWidth="2" /><ellipse cx="39" cy="18" rx="10" ry="7" fill="#444" stroke="#fff" strokeWidth="2" /></Hex>],
      [<Hex><path d="M14 18H46M12 30H48M14 42H46M19 12V48M30 10V50M41 12V48M14 12L46 48M46 12L14 48" {...w} stroke="#ddd" strokeWidth="1.5" /></Hex>, <Hex><path d="M26 11H42V47L14 42Q24 28 26 11Z" fill="#aaa" stroke="#fff" strokeWidth="2" /><path d="M33 12V45M20 28H42" {...w} strokeWidth="2" /></Hex>],
    ],
  },
  {
    title: "Primitive",
    cols: [
      [<Hex><circle cx="30" cy="30" r="15" fill="#fff" /><path d="M40 20Q47 30 38 40Q30 44 22 38Z" fill="#222" /></Hex>, <Hex><text x="19" y="45" fontSize="42" fontWeight="700" fill="#fff" fontFamily="Liberation Serif, serif">7</text></Hex>],
      [<Hex><text x="9" y="42" fontSize="35" fontWeight="700" fill="#ddd" fontFamily="Liberation Serif, serif">0.1</text></Hex>, <Hex><text x="13" y="46" fontSize="46" fontWeight="700" fill="#fff" fontFamily="Liberation Serif, serif">A</text></Hex>],
    ],
  },
  {
    title: "Input",
    cols: [
      [<Key><path d="M30 15V34M8 44H52M10 44V53M16 44V51M22 44V53M28 44V51M34 44V53M40 44V51M46 44V53" stroke="#111" strokeWidth="3" fill="none" /><path d="M20 28H40L30 41Z" fill="#111" /></Key>, <Key fill="#ffc928"><path d="M8 42Q14 32 13 46Q22 22 22 44Q34 14 33 38Q48 10 46 34Q52 24 48 40" fill="none" stroke="#a85a00" strokeWidth="4" /></Key>],
      null,
      [<Key><rect x="16" y="8" width="28" height="44" fill="#222" stroke="#111" strokeWidth="2" /><path d="M19 10H41V26H19Z" fill="#ccc" /></Key>, <><circle cx="30" cy="30" r="28" fill="#a4a4a4" stroke="#222" strokeWidth="2" /><circle cx="30" cy="30" r="24" fill="none" stroke="#c8c8c8" strokeWidth="2" /><path d="M47 18A21 20 0 1 0 47 42L57 30Z" fill="#2b2b2b" stroke="#111" strokeWidth="2" /></>],
      [<Key fill="url(#dark)"><text x="14" y="23" fontSize="30" fontWeight="700" fontStyle="italic" fill="#666" fontFamily="Liberation Sans, sans-serif">4</text><text x="15" y="55" fontSize="36" fontWeight="700" fontStyle="italic" fill="#1a1a1a" fontFamily="Liberation Sans, sans-serif">5</text></Key>, <Key fill="url(#dark)"><path d="M9 11H51V21H9ZM9 26H51V36H9ZM9 41H51V51H9Z" fill="#dedede" stroke="#111" strokeWidth="2" /></Key>],
      null,
      [<Key fill="url(#pink)"><path d="M2 36H58" stroke="#5a0a3a" strokeWidth="2" /><path d="M2 39H58" stroke="#ffd0e4" strokeWidth="2" /><circle cx="5" cy="38" r="5" fill="#fff" stroke="#222" strokeWidth="2" /><circle cx="40" cy="38" r="5" fill="#fff" stroke="#222" strokeWidth="2" /></Key>, <Key fill="#6fd01c"><path d="M30 2H44V16H30ZM3 2H16V16H3Z" fill="#c6f59a" /><path d="M3 16H16V30H3ZM44 16H57V30H44Z" fill="#3fae0c" /><path d="M16 16H30V30H16ZM30 30H44V44H30Z" fill="#a4f01a" /><path d="M16 30H30V44H16Z" fill="#027002" /><path d="M16 44H30V57H16Z" fill="#013f02" /><path d="M44 44H57V57H44Z" fill="#5cffb4" /><path d="M3 30H16V44H3Z" fill="#45e81e" /></Key>],
    ],
  },
  {
    title: "Util",
    cols: [
      [<><path d="M29 10Q24 24 16 34M36 10Q42 24 41 38" fill="none" stroke="#5c2020" strokeWidth="2.5" /><path d="M14 20Q16 4 36 5Q32 20 14 20Z" fill="#5fb51e" stroke="#2c5c0c" /><circle cx="16" cy="40" r="11" fill="#d81414" /><circle cx="41" cy="46" r="11" fill="#d81414" /><circle cx="13" cy="36" r="3" fill="#ffb0b0" /><circle cx="38" cy="42" r="3" fill="#ffb0b0" /></>, <Key fill="url(#gray)"><path d="M3 52H57V57H3Z" fill="#111" /><path d="M30 54V34" stroke="#111" strokeWidth="5" /><path d="M30 36L18 22M30 36L42 22M30 36V10M24 28L8 26M36 28L52 26M18 22L10 12M18 22L20 8M42 22L50 12M42 22L40 8M30 24L24 10M30 24L36 10M14 27L6 18M46 27L54 18M12 26L8 34M48 26L52 34M24 28L14 36M36 28L46 36" fill="none" stroke="#222" strokeWidth="2.5" /></Key>],
      null,
      [<path d="M5 20H27V9L55 30L27 51V40H5Z" fill="#444" stroke="#222" strokeWidth="3" />, <path d="M5 20H27V9L55 30L27 51V40H5Z" fill="#f4f4f4" stroke="#555" strokeWidth="2.5" />],
      null,
      [<><ellipse cx="23" cy="26" rx="15" ry="21" fill="url(#ball)" stroke="#777" strokeWidth="1.5" transform="rotate(25 23 26)" /><ellipse cx="38" cy="38" rx="14" ry="18" fill="#e2407e" stroke="#7d1242" strokeWidth="2" transform="rotate(25 38 38)" /><circle cx="21" cy="28" r="5" fill="#555" /><ellipse cx="36" cy="38" rx="6" ry="7" fill="#7d1242" /></>, <><path d="M21 5H31V22L43 48Q44 55 37 55H15Q8 55 9 48L21 22Z" fill="#f7d5e4" stroke="#7d1242" strokeWidth="2" /><path d="M17 32H35L42 48Q42 54 37 54H15Q10 54 10 48Z" fill="#d9206e" /></>],
    ],
  },
];

function Ribbon() {
  return (
    <div className="flex h-[216px] shrink-0 items-start gap-[10px] rounded-tr-2xl border-r border-t-2 border-[#8a8a8a] bg-gradient-to-b from-[#d8d8d8] to-[#f0f0f0] pl-[7px] pt-[3px] to-[88%]">
      {groups.map((g) => (
        <div key={g.title} className="overflow-hidden rounded-[10px] border-2 border-[#8a8a8a] bg-gradient-to-b from-[#dcdcdc] to-[#efefef]">
          <div className="flex h-[143px] px-[3px]">
            {g.cols.map((c, i) =>
              c ? (
                <div key={i} className="w-[70px]">
                  {c.map((icon, j) => (
                    <button key={j} aria-label={`${g.title} tool`} className="flex h-[70px] w-[70px] items-center justify-center">
                      <svg viewBox="0 0 60 60" className="h-[60px] w-[60px]">{icon}</svg>
                    </button>
                  ))}
                </div>
              ) : (
                <span key={i} className="mx-3 w-px bg-gradient-to-b from-transparent via-[#b5b5b5] to-transparent" />
              ),
            )}
          </div>
          <button className="flex h-[34px] w-full items-center bg-gradient-to-b from-[#303030] to-[#181818] pb-[2px] font-['Liberation_Sans',sans-serif] text-[25px] text-white">
            <span className="flex-1">{g.title}</span>
            <svg viewBox="0 0 20 22" className="mr-[5px] h-[22px] w-5"><path d="M10 1V14M3 11H17" stroke="#aaa" strokeWidth="4" /><path d="M3 12H17L10 21Z" fill="#aaa" /></svg>
          </button>
        </div>
      ))}
    </div>
  );
}

/* ---------- Grasshopper toolbar ---------- */

const Arrow = () => <button aria-label="Options" className="px-[6px]"><svg viewBox="0 0 12 7" className="h-[7px] w-3"><path d="M0 0H12L6 7Z" /></svg></button>;

function Tool({ name, className = "", children }: Kids & { name: string; className?: string }) {
  return (
    <button aria-label={name} className={`flex h-16 items-center justify-center ${className}`}>
      <svg viewBox="0 0 58 58" className="h-[58px] w-[58px] shrink-0">{children}</svg>
    </button>
  );
}

const TUBE = "M1 26L22 3Q27 0 34 1Q50 4 55 15Q58 24 55 33L34 53Q26 58 19 55Q6 51 2 42Q-1 34 1 26Z";

function CanvasBar() {
  return (
    <div className="flex h-[70px] shrink-0 items-center border-t-2 border-[#777] bg-gradient-to-b from-white to-[#f3f3f3] pl-[2px]">
      <Tool name="Open" className="w-[60px]"><path d="M10 2H38L46 8V30H10Z" fill="#eee" stroke="#666" strokeWidth="2" /><path d="M4 28H20L24 20H52V56H4Z" fill="url(#green)" stroke="#2b6a10" strokeWidth="2" /></Tool>
      <Tool name="Save" className="w-[72px]"><path d="M2 2H56V57H10L2 51Z" fill="#1c62d8" stroke="#0a2c88" strokeWidth="3" /><path d="M11 3H47V27H11Z" fill="#f0f0f0" stroke="#0a3a9c" /><path d="M16 12H42M16 18H42" stroke="#bbb" strokeWidth="3" /><path d="M14 36H42V57H14Z" fill="#999" stroke="#333" strokeWidth="2" /><path d="M19 40H28V54H19Z" fill="#1c62d8" /></Tool>
      <span className="ml-[2px] mr-[4px] h-[57px] w-px bg-[#bbb]" />
      <div className="relative">
        <select aria-label="Zoom" className="h-[49px] w-[355px] appearance-none border border-[#777] bg-white pl-[2px] text-black"><option>213%</option></select>
        <svg viewBox="0 0 18 10" className="pointer-events-none absolute right-[12px] top-[19px] h-[10px] w-[18px]"><path d="M1 1L9 9L17 1" fill="none" stroke="#444" strokeWidth="1.5" /></svg>
      </div>
      <Tool name="Zoom extents" className="ml-[5px] w-[60px]"><path d="M4 20V6H19M39 6H54V20M54 38V52H39M19 52H4V38" fill="none" stroke="#1c1c1c" strokeWidth="7" /><path d="M23 23L35 35M35 23L23 35" stroke="#222" strokeWidth="4" /></Tool>
      <span className="w-[6px]" /><Arrow />
      <Tool name="Preview" className="ml-[2px] w-[68px]"><path d="M1 29Q12 14 29 13Q46 14 57 29Q46 45 29 46Q12 45 1 29Z" fill="#e8eef2" stroke="#333" strokeWidth="3" /><circle cx="29" cy="29" r="15" fill="#35a8e0" stroke="#135a86" strokeWidth="2" /><circle cx="29" cy="29" r="7" fill="#0a1420" /><circle cx="24" cy="24" r="4" fill="#fff" /></Tool>
      <Arrow />
      <Tool name="Sketch" className="w-[64px]"><path d="M4 14Q14 22 6 36Q0 50 14 55" fill="none" stroke="#6a3030" strokeWidth="3" /><path d="M23 34L50 4Q56 8 56 20L38 44Z" fill="#e83038" stroke="#a01018" strokeWidth="1.5" /><path d="M23 34L38 44L14 57Z" fill="#e8c070" stroke="#333" /><path d="M20 42L30 50L12 57Z" fill="#222" /></Tool>
      <div className="ml-auto flex items-center pr-px">
        <Tool name="No preview" className="w-[66px]"><path d="M9 20L24 3Q30 0 38 5Q46 10 46 20L42 28Q28 38 14 32Q7 28 9 20Z" fill="url(#ball)" stroke="#777" strokeWidth="1.5" /><path d="M5 42Q8 32 16 30H42L52 40Q50 46 44 52Q36 57 24 56Q10 54 5 42Z" fill="#2c2c2c" stroke="#555" strokeWidth="2" /><path d="M8 46Q28 58 49 46" fill="none" stroke="#ccc" strokeWidth="2.5" /></Tool>
        <Tool name="Wireframe" className="w-[66px]"><path d={TUBE} fill="#fafafa" stroke="#444" strokeWidth="2" /><ellipse cx="40" cy="17" rx="10" ry="16" transform="rotate(-38 40 17)" fill="none" stroke="#444" strokeWidth="3" /><ellipse cx="17" cy="41" rx="9" ry="14" transform="rotate(-38 17 41)" fill="none" stroke="#777" strokeWidth="2" /></Tool>
        <Tool name="Shaded" className="w-[65px] border border-[#0078d7]"><path d={TUBE} fill="url(#red)" stroke="#6a0400" strokeWidth="1.5" /><ellipse cx="40" cy="16" rx="9" ry="15" transform="rotate(-38 40 16)" fill="#8a0c04" stroke="#f04030" strokeWidth="1.5" /></Tool>
        <span className="ml-[8px] h-[57px] w-px bg-[#bbb]" />
        <Tool name="Selected only" className="ml-[7px] w-[62px]"><path d="M2 4Q20 14 10 34Q8 52 44 54" fill="none" stroke="#999" strokeWidth="8" opacity="0.5" /><path d="M14 16L24 4Q34 0 44 5Q56 12 55 26L40 52L18 48Q26 34 14 16Z" fill="url(#teal)" stroke="#084f4c" strokeWidth="1.5" /><ellipse cx="39" cy="16" rx="9" ry="14" transform="rotate(-38 39 16)" fill="#0a6a66" stroke="#30c0b8" /><path d="M4 4Q16 8 18 22M24 46Q34 54 46 55" stroke="#222" strokeWidth="2" fill="none" /></Tool>
        <Tool name="Mesh edges" className="w-[63px]"><path d={TUBE} fill="#e6e6e6" stroke="#777" strokeWidth="1.5" /><path d="M15 11L22 3Q27 0 34 1Q50 4 55 15Q58 24 55 33L44 43Z" fill="url(#green)" stroke="#2b5a10" strokeWidth="1.5" /><ellipse cx="40" cy="16" rx="8" ry="14" transform="rotate(-38 40 16)" fill="#3c8010" stroke="#9ade50" /><path d="M4 6L48 54" stroke="#222" strokeWidth="2" /></Tool>
        <Tool name="Preview quality" className="w-[64px]"><ellipse cx="30" cy="53" rx="24" ry="4" fill="#ccc" /><path d="M29 2A24 25 0 0 0 29 52Z" fill="#ef8c1c" stroke="#8a4a0a" strokeWidth="2" /><path d="M29 2A24 25 0 0 1 29 52Z" fill="#eaeaea" stroke="#777" strokeWidth="2" /></Tool>
        <span className="ml-[5px] h-[57px] w-px bg-[#bbb]" />
        <Tool name="Document preview" className="w-[64px]"><path d="M29 6L47 14L53 32L42 49L26 53L11 42L9 20Z" fill="url(#sky)" stroke="#1f3c86" strokeWidth="3" /><ellipse cx="23" cy="21" rx="7" ry="8" fill="#e6f5ff" /></Tool>
        <Arrow />
      </div>
    </div>
  );
}

/* ---------- Grasshopper canvas nodes ---------- */

const skins = {
  violet: "border-[#1e1e22] bg-[linear-gradient(to_bottom,#f2f2f5_0px,#cfcfd8_15px,#a9a7b6_16px,#8d8b99_100%)]",
  orange: "border-[#5a0f08] bg-[linear-gradient(to_bottom,#ffe9c8_0px,#ffc98a_15px,#ffa52e_16px,#ff8c14_100%)]",
  light: "border-[#222] bg-[linear-gradient(to_bottom,#ffffff_0px,#ececec_15px,#dedede_16px,#cbcbcb_100%)]",
};

const InPort = () => <i className="absolute right-full top-1/2 h-5 w-[9px] -translate-y-1/2 rounded-l-full border-4 border-r-0 border-black bg-white" />;
const OutPort = () => <i className="absolute left-full top-1/2 h-5 w-[9px] -translate-y-1/2 rounded-r-full border-4 border-l-0 border-black bg-white" />;

function Balloon({ className }: { className: string }) {
  return (
    <svg viewBox="0 0 48 48" className={`absolute h-12 w-12 ${className}`} aria-label="Warning">
      <defs><linearGradient id="bal" x1="0" y1="0" x2="0" y2="1"><stop offset="0" stopColor="#fff2c4" /><stop offset="0.4" stopColor="#f9cd54" /><stop offset="1" stopColor="#f0a000" /></linearGradient></defs>
      <path d="M8 2H40Q46 2 46 8V32Q46 38 40 38H31L25 46L19 38H8Q2 38 2 32V8Q2 2 8 2Z" fill="url(#bal)" stroke="#b57f14" strokeWidth="3" />
    </svg>
  );
}

type NodeProps = { place: string; skin: keyof typeof skins; name: string; inputs: string[]; outputs: string[]; left: string; right?: string; jagged?: boolean };

function GhNode({ place, skin, name, inputs, outputs, left, right = "flex-1", jagged }: NodeProps) {
  return (
    <div className={`absolute flex rounded-lg border-2 py-[2px] shadow-[0_2px_3px_rgba(0,0,0,0.25)] ${skins[skin]} ${place}`}>
      <ul className={`flex flex-col ${left}`}>
        {inputs.map((t, i) => <li key={i} className="relative flex flex-1 items-center justify-end pb-[3px] pr-[10px]"><InPort />{t}</li>)}
      </ul>
      <h3 className="flex w-[52px] shrink-0 items-center justify-center rounded-md border-2 border-black bg-[linear-gradient(to_bottom,#b5b5b5_0px,#7d7d7d_11px,#4b4b4b_12px,#333_100%)] text-[27px] font-bold text-white">
        <span className="rotate-180 [writing-mode:vertical-rl]">{name}</span>
      </h3>
      <ul className={`flex flex-col ${right}`}>
        {outputs.map((t, i) => <li key={i} className="relative flex flex-1 items-center pb-[3px] pl-[9px]">{t}<OutPort /></li>)}
      </ul>
      {jagged && (
        <svg viewBox="0 0 12 139" preserveAspectRatio="none" className="absolute -right-[10px] -top-[2px] h-[139px] w-3">
          <path d="M0 1L10 8L2 15L10 22L2 29L10 36L2 43L10 50L2 57L10 64L2 71L10 78L2 85L10 92L2 99L10 106L2 113L10 120L2 127L10 132L2 138H0Z" fill="#dcdcdc" />
          <path d="M1 1L10 8L2 15L10 22L2 29L10 36L2 43L10 50L2 57L10 64L2 71L10 78L2 85L10 92L2 99L10 106L2 113L10 120L2 127L10 132L1 138" fill="none" stroke="#333" strokeWidth="2" />
        </svg>
      )}
    </div>
  );
}

type SliderProps = { place: string; label: string; labelWidth: string; value: string; pos: number; knob: "circle" | "diamond"; side: "left" | "right"; active?: boolean; min: number; max: number };

function GhSlider({ place, label, labelWidth, value, pos, knob, side, active, min, max }: SliderProps) {
  return (
    <label className={`absolute flex h-[44px] items-stretch rounded-lg border-2 shadow-[0_2px_3px_rgba(0,0,0,0.25)] ${active ? "border-[#123c08] bg-[linear-gradient(to_bottom,#d0ff9c_0px,#a4f062_9px,#94ea48_10px,#86dc38_100%)]" : "border-[#2a2a2a] bg-[linear-gradient(to_bottom,#fff_0px,#ececec_9px,#dedede_10px,#cbcbcb_100%)]"} ${place}`}>
      <span className={`flex items-center justify-center rounded-l-md border-r-2 pb-[2px] ${labelWidth} ${active ? "border-[#123c08] bg-[linear-gradient(to_bottom,#a2e87c_0px,#62c52a_10px,#4fb412_100%)]" : "border-[#2a2a2a] bg-[linear-gradient(to_bottom,#f2f2f5_0px,#cfcfd8_9px,#a9a7b6_10px,#8d8b99_100%)]"}`}>{label}</span>
      <span className="relative mx-[20px] flex-1">
        <svg viewBox="0 0 200 14" preserveAspectRatio="none" className="absolute left-0 top-[8px] h-[14px] w-full text-black/20">
          <path d="M1 0V13H199V0M20 5V13M40 5V13M60 5V13M80 5V13M100 2V13M120 5V13M140 5V13M160 5V13M180 5V13" fill="none" stroke="currentColor" strokeWidth="2" vectorEffect="non-scaling-stroke" />
        </svg>
        <span className="absolute top-0 flex h-10 w-0 items-center justify-center" style={{ left: `${pos}%` }}>
          <svg viewBox="0 0 20 20" className="h-5 w-5 shrink-0">
            {knob === "circle" ? <circle cx="10" cy="10" r="6.5" fill="#fff" stroke="#000" strokeWidth="4" /> : <path d="M10 3L17 10L10 17L3 10Z" fill="#fff" stroke="#000" strokeWidth="3" />}
          </svg>
          <span className={`absolute ${side === "left" ? "right-[17px]" : "left-[16px]"} ${active ? "bg-[#92e648]" : "bg-[#d8d8d8]"} leading-6`}>{value}</span>
        </span>
        <input type="range" aria-label={label} min={min} max={max} step="any" defaultValue={value} className="absolute inset-0 w-full opacity-0" />
      </span>
      <OutPort />
    </label>
  );
}

function Canvas() {
  return (
    <div className="relative min-h-0 flex-1 overflow-hidden bg-[#d4d0c8] text-[22px] leading-7 text-black">
      <svg className="absolute inset-0 h-full w-full" aria-hidden="true">
        <defs>
          <pattern id="hatch" width="9" height="9" patternUnits="userSpaceOnUse"><path d="M-2 11L11-2M-2 2L2-2M7 11L11 7" stroke="#c3bfb6" strokeWidth="2" /></pattern>
          <linearGradient id="shade"><stop offset="0.4" stopColor="#000" stopOpacity="0" /><stop offset="1" stopColor="#000" stopOpacity="0.5" /></linearGradient>
          <pattern id="cells" x="413" y="106" width="318.7" height="106.3" patternUnits="userSpaceOnUse"><path d="M0 0H319M0 0V107" stroke="#b2afa7" strokeWidth="4" /></pattern>
          <linearGradient id="wireA" gradientUnits="userSpaceOnUse" x1="512" y1="0" x2="766" y2="0"><stop offset="0" stopColor="#78d22c" /><stop offset="1" stopColor="#a7b295" /></linearGradient>
          <linearGradient id="slab" x1="0" y1="0" x2="0" y2="1"><stop offset="0" stopColor="#d8d8d8" /><stop offset="0.35" stopColor="#aaa" /><stop offset="0.36" stopColor="#808080" /><stop offset="1" stopColor="#8a8a8a" /></linearGradient>
        </defs>
        <rect width="93" height="100%" fill="url(#hatch)" />
        <rect width="100%" height="100%" fill="url(#cells)" />
        <rect width="93" height="100%" fill="url(#shade)" />
        <rect x="93" width="3" height="100%" />
        <rect x="-2" y="1102" width="17" height="69" fill="url(#slab)" stroke="#111" strokeWidth="1.5" />
        <g fill="none" stroke="#5a5955" strokeWidth="6">
          <path d="M702 161H766" />
          <path d="M572 251C668 251 670 221 766 221" />
          <path d="M558 423C662 423 662 399 766 399" />
          <path d="M490 699C542 699 505 593 557 593" />
          <path d="M1122 408C1219 408 1219 281 1316 281" strokeWidth="5" />
          <path d="M1157 489C1240 489 1233 345 1316 345" strokeWidth="5" />
          <path d="M1125 739C1215 739 1204 848 1294 848" strokeWidth="5" />
          <path d="M512 341C639 341 639 281 766 281" stroke="url(#wireA)" />
          <path d="M512 340L766 341" stroke="url(#wireA)" />
        </g>
      </svg>

      <GhSlider place="left-[325px] top-[139px] w-[370px]" label="dis_crv" labelWidth="w-[98px]" value="0.743" pos={74} knob="circle" side="left" min={0} max={1} />
      <GhSlider place="left-[221px] top-[229px] w-[343px]" label="sY" labelWidth="w-[51px]" value="7" pos={46} knob="diamond" side="right" min={0} max={15} />
      <GhSlider place="left-[162px] top-[318px] w-[342px]" label="eY" labelWidth="w-[53px]" value="4" pos={40} knob="diamond" side="right" min={0} max={10} active />
      <GhSlider place="left-[172px] top-[401px] w-[379px]" label="space" labelWidth="w-[88px]" value="5" pos={71} knob="diamond" side="left" min={0} max={7} />
      <GhSlider place="left-[166px] top-[677px] w-[317px]" label="10" labelWidth="w-[54px]" value="0.478" pos={9} knob="circle" side="right" min={0} max={5} />

      <GhNode place="left-[776px] top-[127px] h-[306px] w-[337px]" skin="violet" name="Python" left="w-[96px]" inputs={["dis_crv", "line", "Xcount", "Ycount", "space"]} outputs={["offset_lines", "rectangle", "out", "pattern", "boundary_lines", "boundary_rect", "boundary_diff"]} />
      <GhNode place="left-[566px] top-[525px] h-[306px] w-[158px]" skin="orange" name="PolyOffset" left="w-[55px]" inputs={["P", "D", "Pln", "T", "CF", "OF", "M"]} outputs={["C", "H"]} />
      <GhNode place="left-[1325px] top-[244px] h-[139px] w-[102px]" skin="light" name="Preview" left="w-[44px]" inputs={["G", "M"]} outputs={[]} jagged />
      <GhNode place="left-[1301px] top-[738px] h-[178px] w-[142px]" skin="orange" name="Ins" left="w-[45px]" inputs={["L", "I", "i", "W"]} outputs={["L"]} />
      <GhNode place="left-[1299px] top-[954px] h-[164px] w-[135px]" skin="orange" name="Boundary" left="w-[37px]" inputs={["E"]} outputs={["S"]} />
      <Balloon className="left-[679px] top-[485px]" />
      <Balloon className="left-[1397px] top-[698px]" />
      <Balloon className="left-[1388px] top-[915px]" />

      <div className="absolute left-[961px] top-[467px] flex h-[44px] w-[189px] rounded-lg border-2 border-[#222] bg-[linear-gradient(to_bottom,#f2f2f5_0px,#cfcfd8_11px,#a9a7b6_12px,#8d8b99_100%)]">
        <span className="flex w-[102px] items-center justify-center pb-[2px]">Swatch</span>
        <span className="flex-1 rounded-r-md border-l-2 border-[#222] bg-[linear-gradient(to_bottom,#e8c0c0_0px,#cc7070_11px,#b83c3c_12px,#b63838_100%)]" />
        <OutPort />
      </div>
      <div className="absolute left-[1010px] top-[718px] flex h-[44px] w-[108px] items-center justify-center rounded-lg border-2 border-[#222] bg-[#fffa5c] pb-[4px] pr-[20px] text-[20px]">
        <InPort />0<OutPort />
      </div>

      <svg viewBox="0 0 120 120" className="absolute left-[1434px] top-[1036px] h-[120px] w-[120px]" aria-label="Canvas compass">
        <path d="M16 44Q24 16 56 11" fill="none" stroke="#000" strokeWidth="10" />
        <path d="M4 2L22 6L20 18L8 20Z" />
        <circle cx="57" cy="9" r="8" /><circle cx="36" cy="104" r="8" />
        <circle cx="66" cy="60" r="50" fill="#fff" stroke="#444" strokeWidth="2" />
        <circle cx="66" cy="60" r="47" fill="url(#knob)" />
        <path d="M38 22L43 36L28 34ZM94 22L89 36L104 34ZM38 98L43 84L28 86ZM94 98L89 84L104 86Z" fill="#fff" />
      </svg>
    </div>
  );
}

function GrasshopperWindow() {
  return (
    <section className="mt-[2px] flex min-w-0 flex-1 flex-col overflow-hidden border-2 border-[#6e6e6e] bg-[#f0f0f0] text-black">
      <div className="flex h-[70px] shrink-0 items-center bg-white pb-[3px] pl-[15px]">
        <h1 className="flex-1">Grasshopper - mission3*</h1>
        <WindowButtons className="gap-[94px] pr-[47px]" />
      </div>
      <nav className="flex h-[65px] shrink-0 items-center gap-8 bg-gradient-to-r from-[#f0f0f0] to-[#fcfcfc] pl-[23px] pr-[15px] pt-[1px]">
        {["File", "Edit", "View", "Display", "Solution", "Help"].map((m) => <button key={m}>{m}</button>)}
        <span className="ml-auto">mission3*</span>
      </nav>
      <nav className="relative z-10 -mb-[2px] flex h-[56px] shrink-0 items-center gap-[42px] font-['Liberation_Sans',sans-serif] text-[27px] text-[#666]">
        <button className="-mr-[22px] h-[56px] rounded-t-[14px] border-2 border-b-0 border-l-0 border-[#8a8a8a] bg-gradient-to-b from-white from-70% to-[#dcdcdc] px-[20px] text-black">Params</button>
        {["Maths", "Sets", "Vector", "Curve", "Surface", "Mesh", "Intersect", "Transform", "Display", "Kangaroo2", "Clipper"].map((t) => <button key={t}>{t}</button>)}
      </nav>
      <Ribbon />
      <CanvasBar />
      <Canvas />
      <footer className="flex h-[46px] shrink-0 items-end justify-between border-t-4 border-white px-[14px] text-[#666]">
        <span className="leading-9 text-black">...</span>
        <span className="pr-[70px] leading-[40px]">1.0.0007</span>
      </footer>
    </section>
  );
}

/* ---------- taskbar ---------- */

function Zebras() {
  return (
    <svg viewBox="0 0 200 94" className="h-[94px] w-[200px] shrink-0" aria-label="Zebras">
      <defs>
        <clipPath id="z1"><path d="M18 82L18 62Q12 50 20 34Q26 28 50 28L66 30Q74 20 80 12L88 9L98 9L104 14L114 32L112 37L104 35L98 28L90 46Q84 60 76 64L74 84H68L64 64Q46 66 36 60L24 66L22 84Z" /></clipPath>
        <clipPath id="z2"><path d="M168 86L166 68L152 68L150 60L140 54L132 58L124 56L122 52L134 38L142 40L156 48L170 50Q178 54 178 66L180 86H176L172 70Z" /></clipPath>
      </defs>
      <path d="M0 94Q6 78 50 80Q120 74 200 78V94Z" fill="#c79a52" />
      <g clipPath="url(#z1)"><rect width="200" height="94" fill="#ecd9bd" /><path d="M20 34L26 48M26 30L34 56M34 28L42 54M42 28L48 54M50 28L56 52M58 28L64 50M66 28L74 48M70 24L84 44M75 18L90 38M81 12L97 30M90 8L106 26M16 66H34M16 72H34M64 68H80M64 74H80" stroke="#4a4038" strokeWidth="2.5" /><path d="M16 60H90V66H16Z" fill="#d0a070" opacity="0.5" /></g>
      <path d="M80 14Q68 22 64 32" fill="none" stroke="#3a332c" strokeWidth="3" />
      <g clipPath="url(#z2)"><rect width="200" height="94" fill="#f0d9b8" /><path d="M126 44L134 58M130 40L142 58M138 40L148 62M146 42L154 64M154 46L160 66M162 48L166 66M170 50L174 68M164 74H184M164 80H184" stroke="#5a4630" strokeWidth="2" /></g>
      <path d="M30 84L26 66M38 84L42 64M50 84L48 62M60 84L66 62M72 84L70 64M84 84L90 66M98 84L94 68M108 84L114 66M120 84L124 70M140 84L144 68" stroke="#a8a04c" strokeWidth="2" fill="none" />
    </svg>
  );
}

const apps: { name: string; open?: boolean; active?: boolean; icon: ReactNode }[] = [
  { name: "File Explorer", open: true, icon: <><path d="M4 10H22L26 16H57V50H4Z" fill="#e8a50c" /><path d="M4 18H57V52H4Z" fill="#ffd35c" /><path d="M14 56V36Q14 33 17 33H44Q47 33 47 36V56H38V44H23V56Z" fill="#3c96dc" /></> },
  { name: "Edge", icon: <><path d="M1 34C0 14 14 1 31 1C50 1 60 16 59 28C57 40 40 42 36 36C40 30 36 22 28 21C14 20 3 26 1 34Z" fill="url(#edge)" /><path d="M1 32C4 20 20 18 27 24C18 30 22 54 42 54C24 66 2 54 1 32Z" fill="#1277d6" /><path d="M24 27C18 40 32 52 55 44C46 60 26 60 20 48C16 38 20 30 24 27Z" fill="#124f9e" /></> },
  { name: "Store", icon: <><path d="M16 12V5Q16 3 19 3H41Q44 3 44 5V12" fill="none" stroke="#2ab4f0" strokeWidth="4" /><path d="M1 9H59V52Q59 59 52 59H8Q1 59 1 52Z" fill="#f5f5f5" /><path d="M19 23H29V33H19Z" fill="#f25022" /><path d="M31 23H41V33H31Z" fill="#7fba00" /><path d="M19 35H29V45H19Z" fill="#00a4ef" /><path d="M31 35H41V45H31Z" fill="#ffb900" /></> },
  { name: "Mail", icon: <><path d="M1 20L30 2L59 20V30H1Z" fill="#0c4f96" /><path d="M4 20H56V36L30 44L4 36Z" fill="#f2f2f2" /><path d="M1 20L30 38L59 20V56H1Z" fill="#2aa5ea" /><path d="M30 38L59 20V56Z" fill="#3fc3f5" /><path d="M4 20H56L30 38Z" fill="#fff" /></> },
  { name: "Rhino 7", open: true, active: true, icon: null },
  { name: "Chrome", open: true, icon: <><circle cx="30" cy="30" r="29" fill="#fbc116" /><path d="M30 30L4.9 15.5A29 29 0 0 1 55 15.5H30Z" fill="#e33b2e" /><path d="M4.9 15.5A29 29 0 0 0 30 59L43 36L30 30Z" fill="#2da94f" /><path d="M55.1 15.5H30L43 37L30 59A29 29 0 0 0 55.1 15.5Z" fill="#fcc31e" /><circle cx="30" cy="30" r="14" fill="#fff" /><circle cx="30" cy="30" r="11" fill="#3a7af0" /></> },
  { name: "Photos", open: true, icon: <><rect x="4" y="4" width="52" height="52" rx="6" fill="url(#photo)" /><path d="M4 50L30 24L46 56H10Q4 56 4 50Z" fill="#3fd0f5" /><path d="M24 56L40 34L56 50V52Q55 56 50 56Z" fill="#0f7fd8" /><circle cx="43" cy="13" r="5" fill="#f0f0f0" /></> },
];

function Tray({ name, className, children }: Kids & { name: string; className: string }) {
  return <button aria-label={name} className={`flex items-center justify-center ${className}`}><svg viewBox="0 0 42 42" className="h-[42px] w-[42px]">{children}</svg></button>;
}

function Taskbar() {
  const s = { fill: "none", stroke: "#fff", strokeWidth: 2 } as const;
  return (
    <footer className="flex h-[100px] shrink-0 items-stretch bg-[#202125] text-white">
      <button aria-label="Start" className="flex w-[120px] items-center justify-center">
        <svg viewBox="0 0 40 40" className="h-10 w-10"><path d="M0 6L17 3V19H0ZM19 3L40 0V19H19ZM0 21H17V37L0 34ZM19 21H40V40L19 37Z" fill="#fff" /></svg>
      </button>
      <label className="flex w-[720px] items-center border-[3px] border-[#bfbfbf] bg-[#f2f2f2] pl-[29px] text-[35px] text-[#222]">
        <svg viewBox="0 0 50 50" className="h-[50px] w-[50px]"><circle cx="31" cy="18" r="16" fill="none" stroke="#111" strokeWidth="3" /><path d="M20 30L1 49" stroke="#111" strokeWidth="3" /></svg>
        <input placeholder="Type here to search" aria-label="Search" className="ml-[30px] min-w-0 flex-1 bg-transparent pt-[2px] placeholder:text-[#222]" />
        <Zebras />
      </label>
      <button aria-label="Task view" className="mr-[6px] flex w-[120px] items-center justify-center">
        <svg viewBox="0 0 40 40" className="h-10 w-10"><path d="M1 1V7H25V1M1 39V33H25V39M1 13H25V27H1ZM36 0V10M36 21V40" {...s} strokeWidth="2.5" /><circle cx="36" cy="15" r="3" fill="#fff" /></svg>
      </button>
      {apps.map((a) => (
        <button key={a.name} aria-label={a.name} className={`relative flex w-[124px] items-center justify-center ${a.active ? "bg-[#4c4d51]" : ""}`}>
          {a.icon ? <svg viewBox="0 0 60 60" className="h-[60px] w-[60px]">{a.icon}</svg> : <RhinoLogo className="h-[60px] w-[60px]" />}
          {a.open && <i className={`absolute bottom-0 h-[5px] bg-[#76b9ed] ${a.active ? "w-full" : "w-[100px]"}`} />}
        </button>
      ))}
      <div className="ml-auto flex items-stretch">
        <button className="flex items-center gap-[22px] text-[31px]">
          <svg viewBox="0 0 62 60" className="h-[60px] w-[62px]"><path d="M24 1Q38 10 34 26Q28 38 10 36Q2 32 1 24Q16 28 22 18Q26 10 24 1Z" fill="url(#moon)" /><path d="M14 58Q1 58 1 47Q2 37 12 36Q14 20 28 20Q40 21 42 31Q58 28 60 46Q60 58 48 58Z" fill="url(#cloud)" /></svg>
          <span>12°C</span>
        </button>
        <Tray name="Hidden icons" className="ml-[66px] w-[50px]"><path d="M5 29L21 13L37 29" {...s} /></Tray>
        <Tray name="Update" className="ml-[33px] w-[44px]"><path d="M24 37L2 34V8L40 2V22" {...s} /><path d="M12 18Q18 10 26 14V20M28 22Q22 30 14 26V20" {...s} /><circle cx="32" cy="30" r="10" fill="#ff9500" /></Tray>
        <Tray name="Volume" className="ml-[35px] w-[44px]"><path d="M3 15H8L15 7V35L8 27H3ZM20 15Q24 21 20 27M26 11Q32 21 26 31" {...s} /><path d="M33 5Q42 21 33 37" {...s} stroke="#777" /></Tray>
        <Tray name="OneDrive" className="ml-[36px] w-[44px]"><path d="M7 34Q0 32 2 25Q4 20 9 20Q12 8 24 9Q32 11 33 19Q41 22 40 29Q39 34 35 34Z" fill="#f4f4f4" /><path d="M9 20Q12 8 24 9Q32 11 33 19L20 25Z" fill="#a5a5a5" /></Tray>
        <Tray name="Network" className="ml-[38px] w-[44px]"><path d="M6 36Q6 10 36 6M14 36Q14 18 36 15M22 36Q22 27 36 24" {...s} /><circle cx="33" cy="34" r="3" fill="#fff" /></Tray>
        <Tray name="Battery" className="ml-[34px] w-[44px]"><path d="M16 11H38V33H7V26M40 18V26" {...s} strokeWidth="3" /><path d="M18 17H34V30H12Z" fill="#fff" /><path d="M3 4V12M11 4V12M7 20V33" {...s} strokeWidth="3" /><path d="M1 10H13V16Q7 24 1 16Z" fill="#fff" /></Tray>
        <button className="ml-[35px]">ENG</button>
        <button className="ml-[34px] w-[136px] leading-[47px]">7:38 PM<br />1/31/2024</button>
        <button aria-label="Notifications" className="ml-[43px] mr-[33px] flex w-[60px] items-center">
          <svg viewBox="0 0 60 60" className="h-[60px] w-[60px]"><path d="M1 1H40V36H14V44L6 36H1Z" fill="#fff" /><path d="M8 10H32M8 18H32M8 26H28" stroke="#222" strokeWidth="2.5" /><circle cx="39" cy="38" r="20" fill="#333539" stroke="#999" strokeWidth="1.5" /><text x="32" y="48" fontSize="27" fill="#fff" fontFamily="Open Sans, sans-serif">1</text></svg>
        </button>
        <i className="w-[12px] border-l-2 border-[#55565a]" />
      </div>
    </footer>
  );
}

export default function App() {
  return (
    <div className="flex h-screen flex-col overflow-hidden bg-[#e6e6e6] font-['Open_Sans','Noto_Sans',sans-serif] text-[28px] leading-9">
      <Paints />
      <main className="flex min-h-0 flex-1">
        <div className="flex w-1/2 shrink-0"><RhinoWindow /></div>
        <div className="flex w-4 shrink-0 flex-col bg-gradient-to-r from-[#c9c9c9] to-[#f0f0f0]">
          <div className="mt-[136px] h-10 w-[10px] overflow-hidden bg-[#0078d7]"><i className="block h-10 w-[8px] rounded-r-full border-r-2 border-[#b0609c] bg-[#26262c]" /></div>
        </div>
        <GrasshopperWindow />
        <div className="w-[4px] shrink-0" />
      </main>
      <Taskbar />
    </div>
  );
}
